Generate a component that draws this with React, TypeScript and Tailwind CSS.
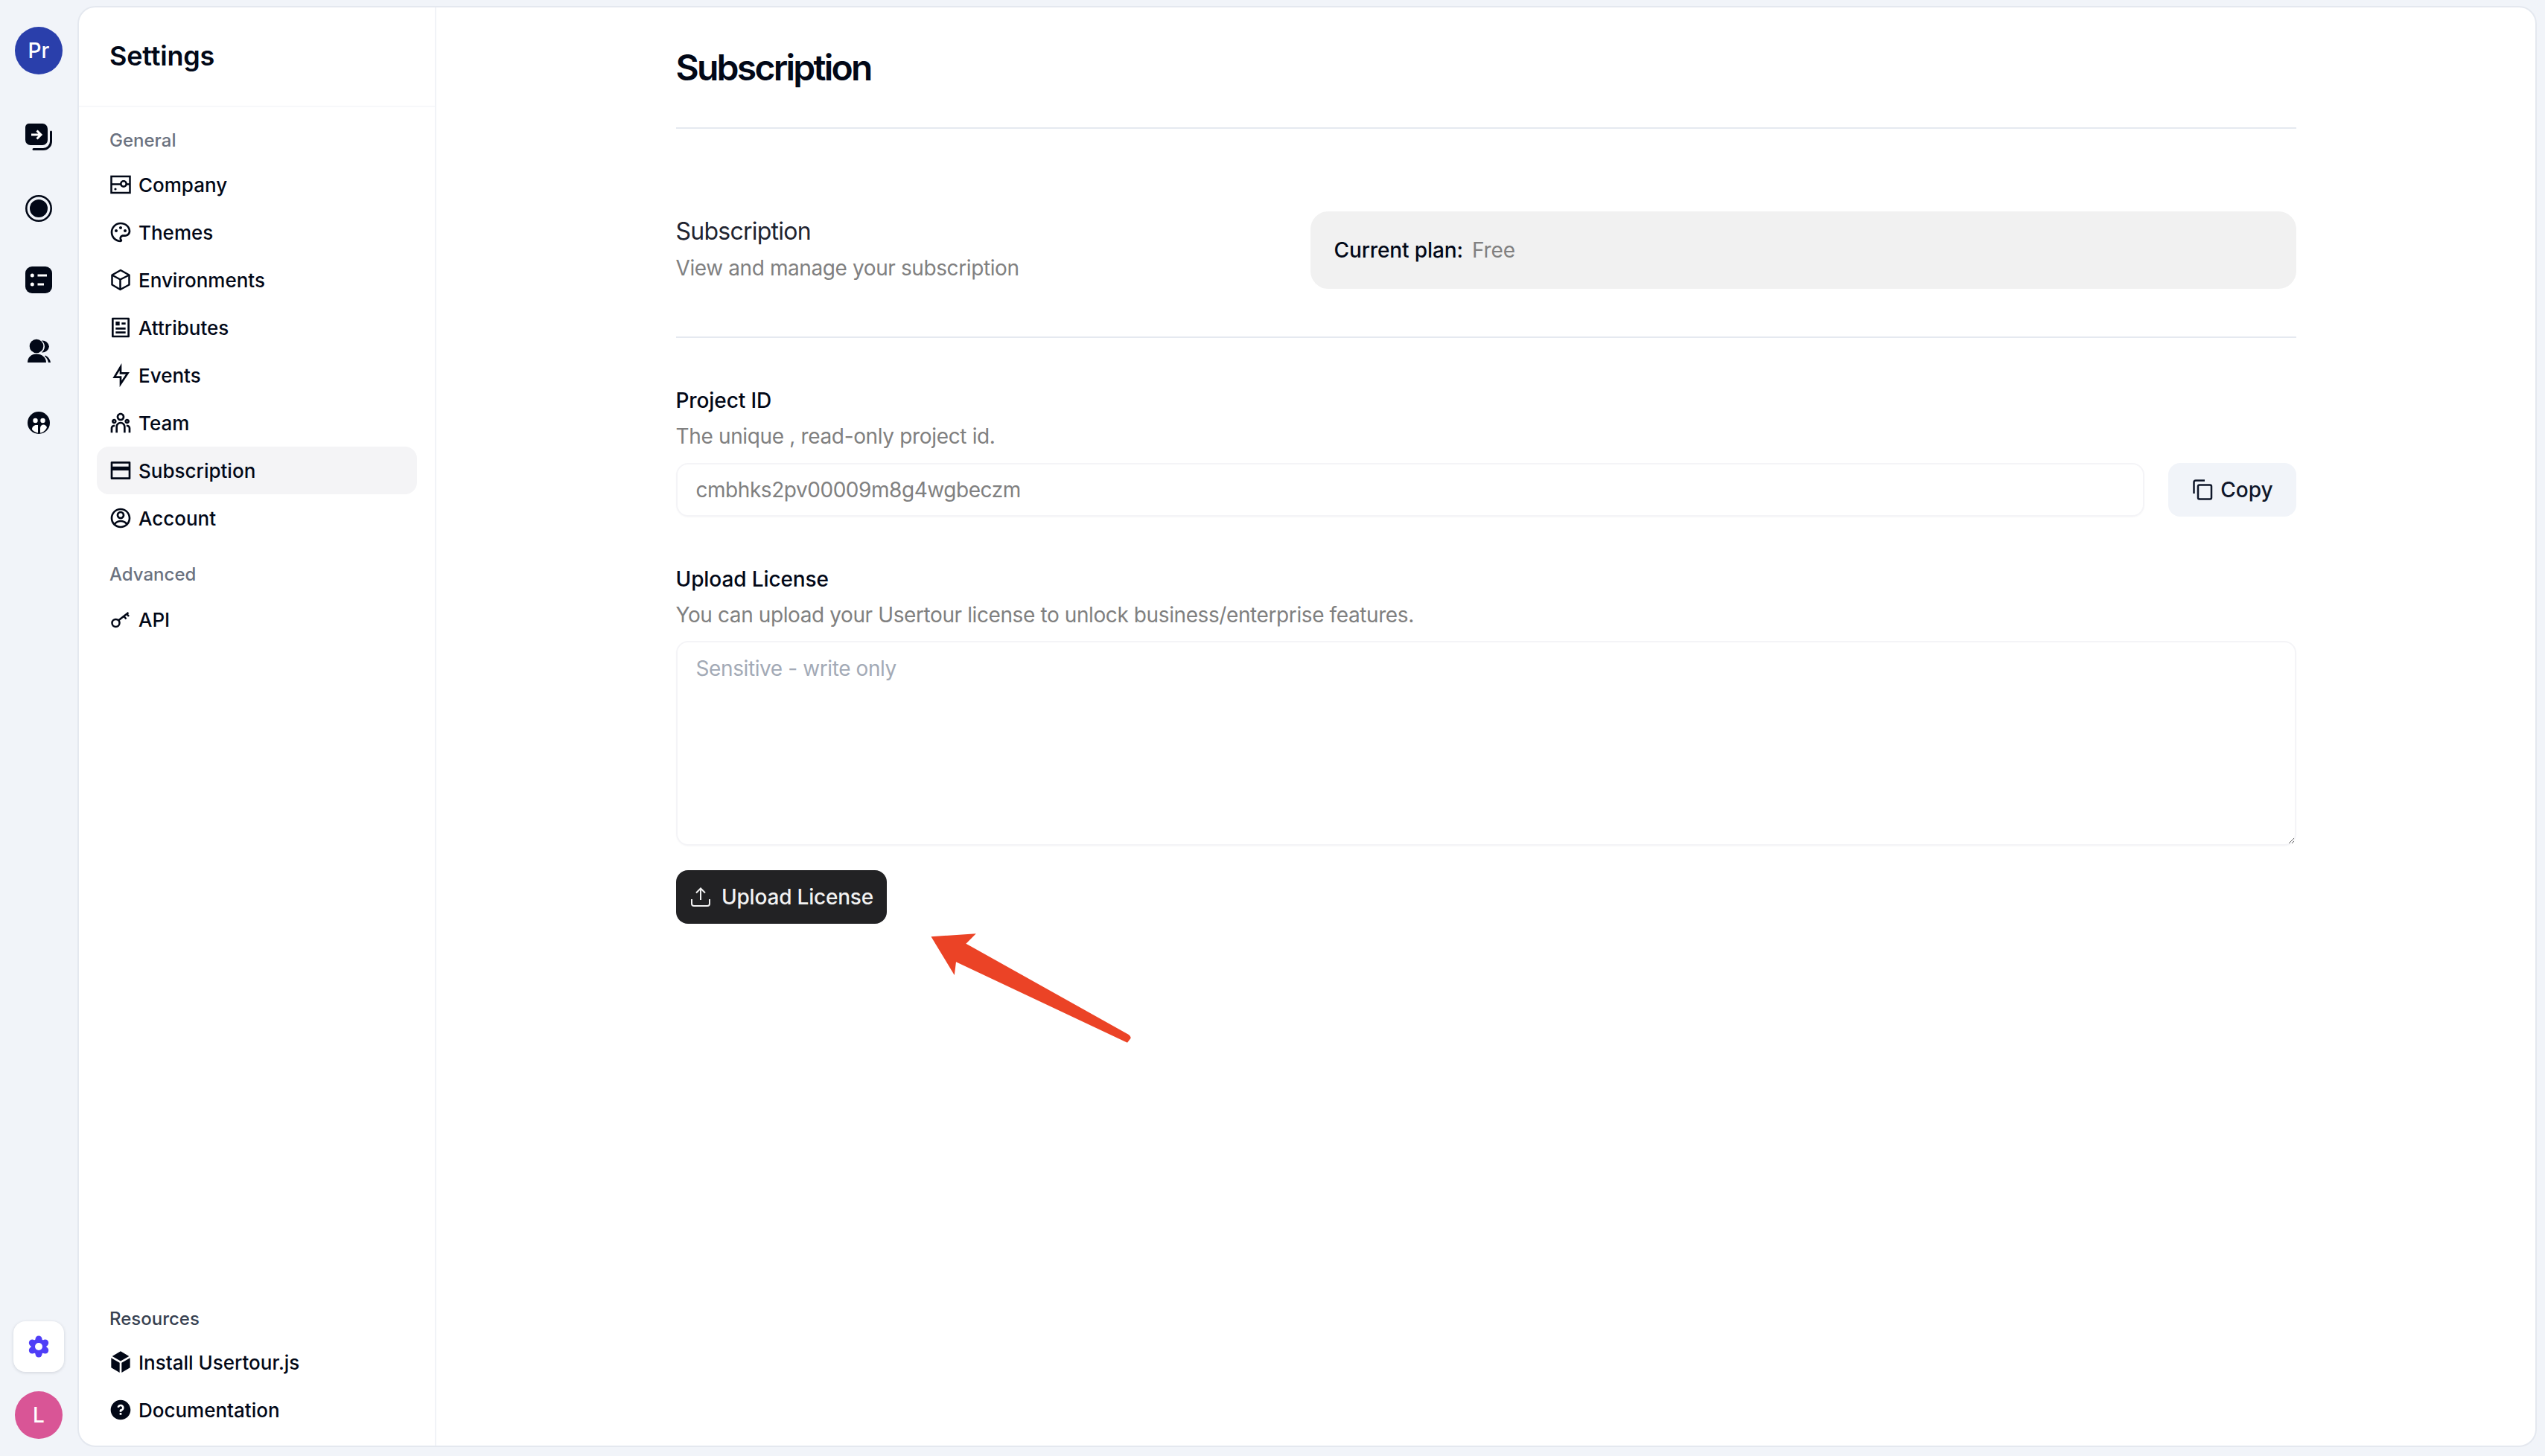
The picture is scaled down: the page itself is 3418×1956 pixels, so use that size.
import {
  RiAccountCircleLine,
  RiArticleLine,
  RiBankCard2Line,
  RiBox3Fill,
  RiFlashlightLine,
  RiPaletteLine,
  RiQuestionFill,
  RiTeamLine,
} from "react-icons/ri";

const CompanyIcon = ({ className }: { className?: string }) => (
  <svg viewBox="0 0 32 32" fill="none" stroke="currentColor" strokeWidth="2.500" className={className}>
    <rect x="3.500" y="5" width="25" height="22" />
    <path d="M3.500 15.500h13M24 15.500h4.500" />
    <circle cx="20" cy="15" r="3.700" />
    <circle cx="9" cy="22" r="1.600" fill="currentColor" stroke="none" />
  </svg>
);

const CubeIcon = ({ className }: { className?: string }) => (
  <svg viewBox="0 0 32 32" fill="none" stroke="currentColor" strokeWidth="2.500" strokeLinejoin="round" className={className}>
    <path d="M16 3L27.500 9.500V22.500L15.500 29L4.500 22.500V9.500Z" />
    <path d="M4.500 9.500L15.500 15.500V29M15.500 15.500L27.500 9.500" />
  </svg>
);

const KeyIcon = ({ className }: { className?: string }) => (
  <svg viewBox="0 0 32 32" fill="none" stroke="currentColor" strokeWidth="2.500" className={className}>
    <circle cx="9.500" cy="21" r="5" />
    <path d="M13 17.500L26.500 7M20.500 12l3 3.500M24.500 9l2.500 3" />
  </svg>
);

const FlowsIcon = () => (
  <svg viewBox="0 0 36 36" className="h-9 w-9 text-[#020817]">
    <path d="M5 0h18a7 7 0 0 1 7 7v15a7 7 0 0 1-7 7H7a7 7 0 0 1-7-7V5a5 5 0 0 1 5-5z" fill="currentColor" />
    <path d="M34.500 11v13a10.500 10.500 0 0 1-10.500 10.500H11" fill="none" stroke="currentColor" strokeWidth="3" strokeLinecap="round" />
    <path d="M8 15h13M15.500 9.500L21 15l-5.500 5.500" fill="none" stroke="#fff" strokeWidth="3" />
  </svg>
);

const LauncherIcon = () => (
  <svg viewBox="0 0 36 36" className="h-9 w-9 text-[#020817]">
    <circle cx="18" cy="18" r="16.700" fill="none" stroke="currentColor" strokeWidth="2.600" />
    <circle cx="18" cy="18" r="12" fill="currentColor" />
  </svg>
);

const ChecklistIcon = () => (
  <svg viewBox="0 0 36 36" className="h-9 w-9 text-[#020817]">
    <rect x="0" y="0" width="36" height="36" rx="9" fill="currentColor" />
    <circle cx="9.300" cy="12" r="2.500" fill="#fff" />
    <circle cx="9.300" cy="24" r="2.500" fill="#fff" />
    <path d="M16.500 12H29M16.500 24H25" stroke="#fff" strokeWidth="3" />
  </svg>
);

const UsersIcon = () => (
  <svg viewBox="0 0 36 36" className="h-9 w-9 text-[#020817]">
    <circle cx="15" cy="11" r="9.300" fill="currentColor" />
    <path d="M3 33C3 26 8 21.500 15 21.500C22 21.500 28 26 28 33Z" fill="currentColor" />
    <path d="M22 3.500A9 9 0 0 1 32 11.500A9 9 0 0 1 22 19.500A11 11 0 0 0 26 11.500A11 11 0 0 0 22 3.500Z" fill="currentColor" />
    <path d="M27 23.500Q33 26.500 34 33H31Q30 27.500 26 24.500Z" fill="currentColor" />
  </svg>
);

const CompaniesIcon = () => (
  <svg viewBox="0 0 30 30" className="h-[30px] w-[30px] text-[#020817]">
    <circle cx="15" cy="15" r="15" fill="currentColor" />
    <circle cx="10.500" cy="12" r="3.200" fill="#fff" />
    <circle cx="20.500" cy="12" r="3.200" fill="#fff" />
    <path d="M6 24C6 20 9 17.500 13 18H14V28.500C11 28 8 26.500 6 24Z" fill="#fff" />
    <path d="M17 28.500V22C17 19.500 19 17.500 21.500 17.500C23.500 17.500 25 19 26 21C24.500 25 21 28 17 28.500Z" fill="#fff" />
  </svg>
);

const GearIcon = () => (
  <svg viewBox="0 0 32 32" className="h-8 w-8 text-[#4f3ef7]" fill="currentColor">
    <circle cx="16" cy="16" r="10.500" />
    <circle cx="16" cy="6" r="4.500" />
    <circle cx="16" cy="26" r="4.500" />
    <circle cx="7.300" cy="11" r="4.500" />
    <circle cx="24.700" cy="11" r="4.500" />
    <circle cx="7.300" cy="21" r="4.500" />
    <circle cx="24.700" cy="21" r="4.500" />
    <circle cx="16" cy="16" r="5" fill="#fff" />
  </svg>
);

const CopyIcon = () => (
  <svg viewBox="0 0 32 32" fill="none" stroke="currentColor" strokeWidth="2.500" className="h-8 w-8">
    <rect x="10" y="9.500" width="18" height="19" rx="2" />
    <path d="M19 3.500H7a2.500 2.500 0 0 0-2.500 2.500v15" />
  </svg>
);

const UploadIcon = () => (
  <svg viewBox="0 0 32 32" fill="none" stroke="currentColor" strokeWidth="2" className="h-8 w-8">
    <path d="M16 20V4.500M10 10.500l6-6 6 6" />
    <path d="M4 19v6a3 3 0 0 0 3 3h18a3 3 0 0 0 3-3v-6" />
  </svg>
);

const general = [
  { label: "Company", icon: <CompanyIcon className="h-8 w-8" /> },
  { label: "Themes", icon: <RiPaletteLine className="h-8 w-8" /> },
  { label: "Environments", icon: <CubeIcon className="h-8 w-8" /> },
  { label: "Attributes", icon: <RiArticleLine className="h-8 w-8" /> },
  { label: "Events", icon: <RiFlashlightLine className="h-8 w-8" /> },
  { label: "Team", icon: <RiTeamLine className="h-8 w-8" /> },
  { label: "Subscription", icon: <RiBankCard2Line className="h-8 w-8" />, active: true },
  { label: "Account", icon: <RiAccountCircleLine className="h-8 w-8" /> },
];

const NavRow = ({ label, icon, active }: { label: string; icon: React.ReactNode; active?: boolean }) => (
  <div
    className={`flex h-16 items-center gap-2 rounded-2xl px-4 text-[26px] font-medium text-[#020817] ${
      active ? "bg-[#f4f4f6]" : ""
    }`}
  >
    {icon}
    <span>{label}</span>
  </div>
);

const Rail = () => (
  <div className="flex w-[104px] shrink-0 flex-col items-center pb-[23px] pt-9">
    <div className="flex h-16 w-16 items-center justify-center rounded-full bg-[#2a3fab] text-[28px] font-medium text-white">
      Pr
    </div>
    <div className="mt-9 flex flex-col items-center">
      <div className="flex h-24 items-center justify-center"><FlowsIcon /></div>
      <div className="flex h-24 items-center justify-center"><LauncherIcon /></div>
      <div className="flex h-24 items-center justify-center"><ChecklistIcon /></div>
      <div className="flex h-24 items-center justify-center"><UsersIcon /></div>
      <div className="flex h-24 items-center justify-center"><CompaniesIcon /></div>
    </div>
    <div className="mt-auto flex h-[68px] w-[68px] items-center justify-center rounded-2xl bg-white shadow-[0_1px_4px_rgba(15,23,42,0.15)]">
      <GearIcon />
    </div>
    <div className="mt-[26px] flex h-16 w-16 items-center justify-center rounded-full bg-[#d95596] text-[28px] font-medium text-white">
      L
    </div>
  </div>
);

const Sidebar = () => (
  <div className="flex w-[480px] shrink-0 flex-col border-r-2 border-[#f1f3f7]">
    <div className="flex h-[134px] items-center border-b-2 border-[#f7f8fa] pb-[2px] pl-[41px] text-[36px] font-semibold tracking-[-0.2px] text-[#020817]">
      Settings
    </div>
    <div className="flex flex-1 flex-col px-6 pt-[29px]">
      <div className="px-[17px] pb-[11px] text-2xl font-medium leading-8 text-[#6b7280]">General</div>
      {general.map((item) => (
        <NavRow key={item.label} {...item} />
      ))}
      <div className="mt-[28px] px-[17px] pb-[12px] text-2xl font-medium leading-8 text-[#6b7280]">Advanced</div>
      <NavRow label="API" icon={<KeyIcon className="h-8 w-8" />} />
      <div className="mt-auto px-[17px] pb-[10px] text-2xl font-medium leading-8 text-[#374151]">Resources</div>
      <NavRow label="Install Usertour.js" icon={<RiBox3Fill className="h-8 w-8" />} />
      <NavRow label="Documentation" icon={<RiQuestionFill className="h-8 w-8" />} />
      <div className="h-4" />
    </div>
  </div>
);

const Content = () => (
  <div className="flex flex-1 justify-center">
    <div className="w-[2176px]">
      <div className="flex h-[163px] items-center border-b-2 border-[#e5e9f0] text-[48px] font-semibold tracking-[-2.75px] text-[#020817]">
        Subscription
      </div>
      <div className="mt-[111px] flex items-center border-b-2 border-[#e5e9f0] pb-[64px]">
        <div className="w-[852px] pb-[6px]">
          <div className="text-[32px] leading-[48px] tracking-[-0.75px] text-[#1f2430]">Subscription</div>
          <div className="mt-[5px] text-[28px] leading-10 tracking-[-0.4px] text-[#808080]">
            View and manage your subscription
          </div>
        </div>
        <div className="flex h-[104px] flex-1 items-center gap-3 rounded-3xl bg-[#f1f1f1] px-8 text-[28px]">
          <span className="font-medium tracking-[-0.1px] text-[#020817]">Current plan:</span>
          <span className="tracking-[-0.1px] text-[#808080]">Free</span>
        </div>
      </div>
      <div className="mt-[64px] text-[28px] font-medium leading-10 tracking-[-0.1px] text-[#020817]">Project ID</div>
      <div className="mt-2 text-[28px] leading-10 tracking-[-0.35px] text-[#808080]">
        The unique , read-only project id.
      </div>
      <div className="mt-4 flex gap-8">
        <input
          readOnly
          value="cmbhks2pv00009m8g4wgbeczm"
          className="h-[72px] flex-1 rounded-2xl border-2 border-[#f4f4f7] px-[25px] text-[28px] tracking-[-0.45px] text-[#808080] shadow-[0_1px_2px_rgba(0,0,0,0.03)] outline-none"
        />
        <button className="flex h-[72px] w-[172px] items-center justify-center gap-2 rounded-2xl bg-[#f1f4f9] text-[28px] font-medium text-[#0f172a]">
          <CopyIcon />
          Copy
        </button>
      </div>
      <div className="mt-[64px] text-[28px] font-medium leading-10 tracking-[-0.1px] text-[#020817]">Upload License</div>
      <div className="mt-2 text-[28px] leading-10 tracking-[-0.4px] text-[#808080]">
        You can upload your Usertour license to unlock business/enterprise features.
      </div>
      <textarea
        placeholder="Sensitive - write only"
        className="mt-[15px] block h-[275px] w-full rounded-2xl border-2 border-[#f4f4f7] px-[25px] pb-4 pt-[14px] text-[28px] tracking-[-0.4px] shadow-[0_1px_2px_rgba(0,0,0,0.03)] outline-none placeholder:text-[#a3aab6]"
      />
      <button className="mt-[33px] flex h-[72px] w-[283px] items-center justify-center gap-3 rounded-2xl bg-[#222224] text-[28px] font-medium tracking-[-0.2px] text-[#f2f2f2]">
        <UploadIcon />
        Upload License
      </button>
    </div>
  </div>
);

export default function App() {
  return (
    <div className="relative flex h-[1956px] w-full bg-[#f1f4f9] font-['Inter',sans-serif]">
      <Rail />
      <div className="mb-3 mr-[11px] mt-2 flex flex-1 overflow-hidden rounded-3xl border-2 border-[#e4e8ef] bg-white">
        <Sidebar />
        <Content />
      </div>
      {/* red annotation arrow over the page */}
      <svg className="absolute left-0 top-0 h-[1956px] w-[3418px]" viewBox="0 0 3418 1956" fill="none">
        <path
          d="M1250.500 1258.300L1310.800 1254.300L1297.400 1267.700L1516 1390Q1519.500 1393 1518.400 1395L1514 1400.700L1284 1292.300L1281.800 1310Z"
          fill="#eb4326"
        />
      </svg>
    </div>
  );
}
